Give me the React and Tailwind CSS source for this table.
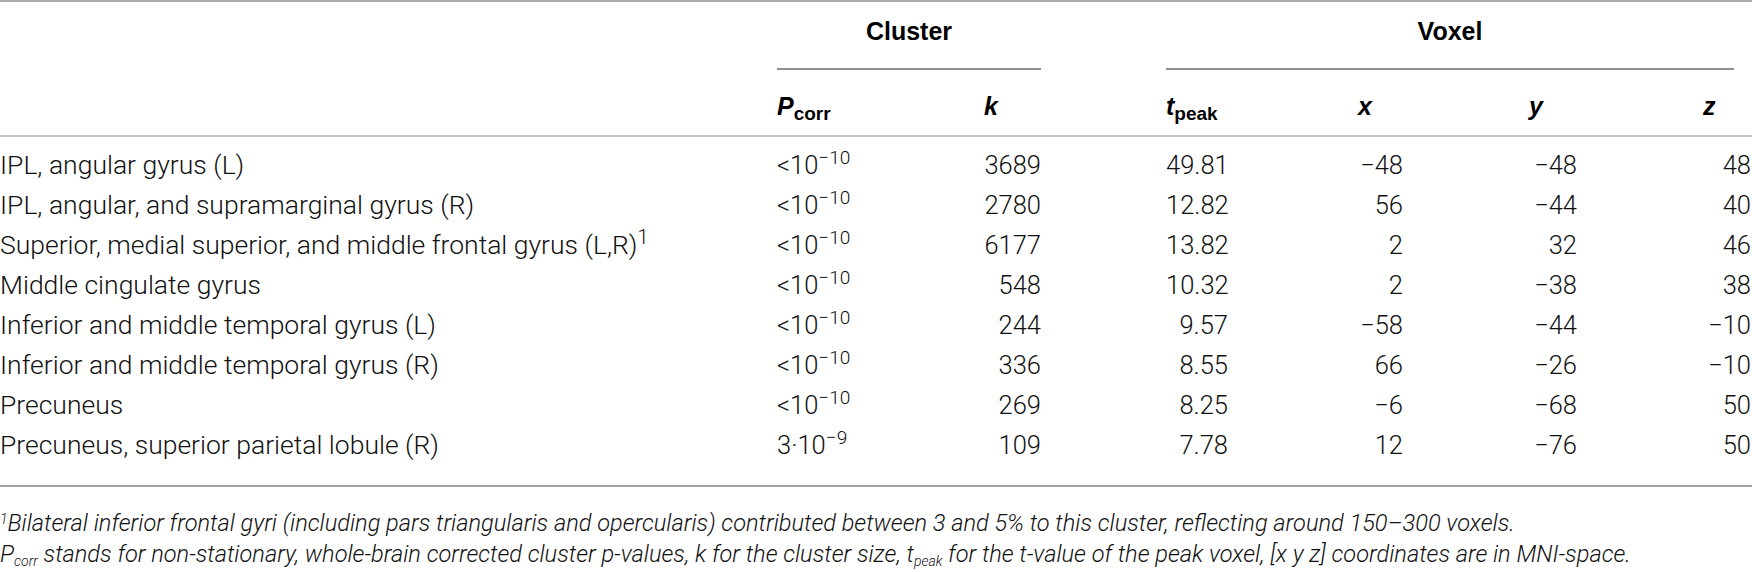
import React from "react";

// table rows: label, p-value, cluster size, peak t and MNI coordinates
const rows = [
  { label: "IPL, angular gyrus (L)", p: "lt", k: "3689", t: "49.81", x: "−48", y: "−48", z: "48" },
  { label: "IPL, angular, and supramarginal gyrus (R)", p: "lt", k: "2780", t: "12.82", x: "56", y: "−44", z: "40" },
  { label: "Superior, medial superior, and middle frontal gyrus (L,R)", note: "1", p: "lt", k: "6177", t: "13.82", x: "2", y: "32", z: "46" },
  { label: "Middle cingulate gyrus", p: "lt", k: "548", t: "10.32", x: "2", y: "−38", z: "38" },
  { label: "Inferior and middle temporal gyrus (L)", p: "lt", k: "244", t: "9.57", x: "−58", y: "−44", z: "−10" },
  { label: "Inferior and middle temporal gyrus (R)", p: "lt", k: "336", t: "8.55", x: "66", y: "−26", z: "−10" },
  { label: "Precuneus", p: "lt", k: "269", t: "8.25", x: "−6", y: "−68", z: "50" },
  { label: "Precuneus, superior parietal lobule (R)", p: "exact", k: "109", t: "7.78", x: "12", y: "−76", z: "50" },
];

function PValue({ kind }) {
  if (kind === "exact") {
    return (
      <span>
        3·10<sup>−9</sup>
      </span>
    );
  }
  return (
    <span>
      &lt;10<sup>−10</sup>
    </span>
  );
}

function Row({ row }) {
  return (
    <div className="flex h-[40px] items-center text-[25.5px]">
      <div className="w-[777px] shrink-0 text-[26.5px]">
        {row.label}
        {row.note && <sup>{row.note}</sup>}
      </div>
      <div className="w-[207px] shrink-0">
        <PValue kind={row.p} />
      </div>
      <div className="w-[57px] shrink-0 text-right">{row.k}</div>
      <div className="ml-[125px] w-[62px] shrink-0 text-right">{row.t}</div>
      <div className="ml-[130px] w-[45px] shrink-0 text-right">{row.x}</div>
      <div className="ml-[126px] w-[48px] shrink-0 text-right">{row.y}</div>
      <div className="ml-[126px] w-[48px] shrink-0 text-right">{row.z}</div>
    </div>
  );
}

export default function App() {
  return (
    <div className="w-[1752px] h-[572px] overflow-hidden bg-white font-['Roboto','Liberation_Sans',sans-serif] font-light text-[25px] text-[#111]">
      <div className="border-t-2 border-[#ababab]">
        {/* Group headers */}
        <div className="flex pt-[14px] font-['Liberation_Sans',Arial,sans-serif] font-bold text-black">
          <div className="ml-[777px] w-[264px] shrink-0 border-b-2 border-[#8f8f8f] pb-[22px] text-center leading-[30px]">
            Cluster
          </div>
          <div className="ml-[125px] w-[568px] shrink-0 border-b-2 border-[#8f8f8f] pb-[22px] text-center leading-[30px]">
            Voxel
          </div>
        </div>

        {/* Column headers */}
        <div className="flex border-b-2 border-[#c4c4c4] pt-[21px] pb-[14px] font-['Liberation_Sans',Arial,sans-serif] font-bold leading-[30px] text-black">
          <div className="w-[777px] shrink-0" />
          <div className="w-[207px] shrink-0">
            <i>P</i>
            <sub className="text-[19px]">corr</sub>
          </div>
          <div className="w-[57px] shrink-0">
            <i>k</i>
          </div>
          <div className="ml-[125px] w-[62px] shrink-0 whitespace-nowrap">
            <i>t</i>
            <sub className="text-[19px]">peak</sub>
          </div>
          <div className="ml-[130px] w-[45px] shrink-0">
            <i>x</i>
          </div>
          <div className="ml-[126px] w-[48px] shrink-0">
            <i>y</i>
          </div>
          <div className="ml-[126px] w-[48px] shrink-0">
            <i>z</i>
          </div>
        </div>

        {/* Body */}
        <div className="border-b-2 border-[#a3a3a3] pt-[8px] pb-[20px]">
          {rows.map((row) => (
            <Row key={row.label} row={row} />
          ))}
        </div>

        {/* Footnotes */}
        <div className="pt-[21px] text-[23.6px] italic leading-[31px]">
          <p className="whitespace-nowrap">
            <sup className="text-[14px]">1</sup>
            Bilateral inferior frontal gyri (including pars triangularis and opercularis) contributed between 3 and 5% to this cluster, reflecting around 150–300 voxels.
          </p>
          <p className="whitespace-nowrap">
            P<sub className="text-[14px]">corr</sub> stands for non-stationary, whole-brain corrected cluster p-values, k for the cluster size, t<sub className="text-[14px]">peak</sub> for the t-value of the peak voxel, [x y z] coordinates are in MNI-space.
          </p>
        </div>
      </div>
    </div>
  );
}
